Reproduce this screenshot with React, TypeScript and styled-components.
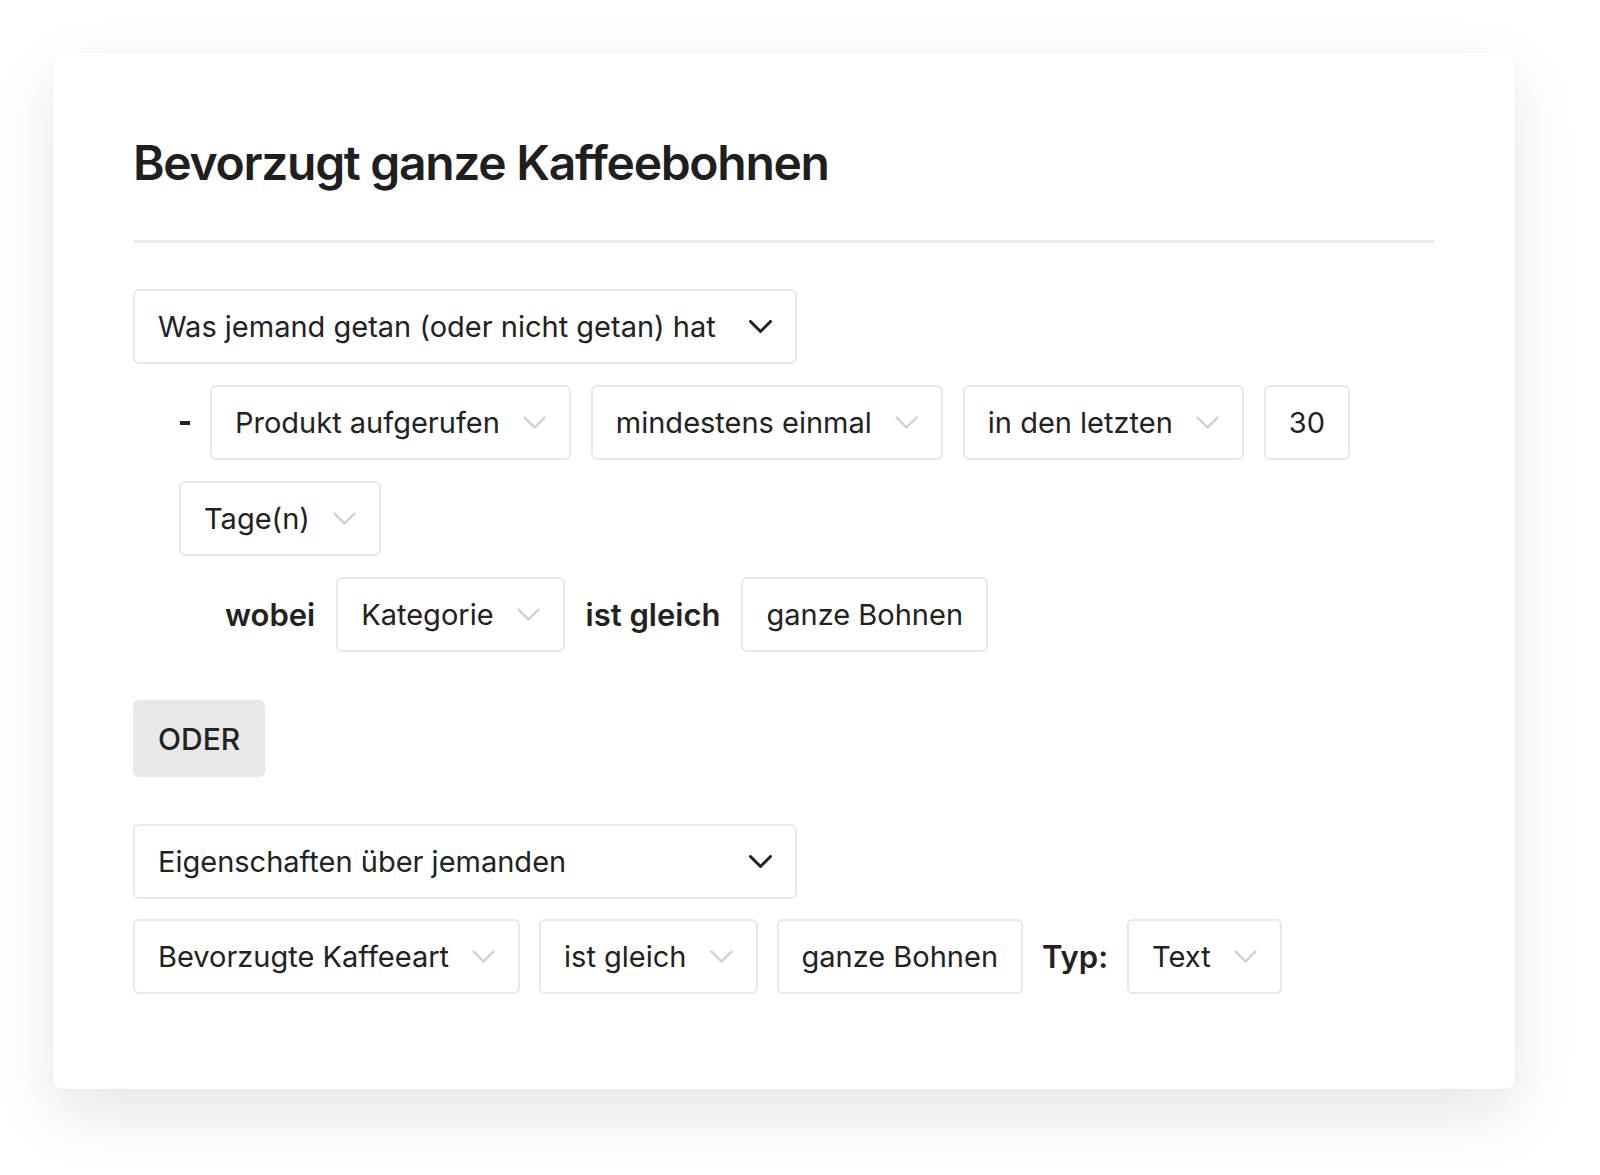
import styled, { createGlobalStyle } from "styled-components";

const GlobalStyle = createGlobalStyle`
	body {
		margin: 0;
		background: #ffffff;
		font-family: Inter, "Liberation Sans", sans-serif;
		color: #222222;
	}
`;

const Page = styled.div`
	min-height: 1175px;
	box-sizing: border-box;
	padding: 53px 0 86px 53px;
	background: #ffffff;
`;

const Card = styled.div`
	width: 1462px;
	box-sizing: border-box;
	padding: 81px 80px 95px;
	background: #ffffff;
	border-radius: 10px;
	box-shadow:
		0 24px 64px rgba(0, 0, 0, 0.1),
		0 0 0 1px rgba(0, 0, 0, 0.015);
`;

const Title = styled.h1`
	margin: 0;
	font-size: 48px;
	line-height: 58px;
	font-weight: 600;
	letter-spacing: -1.3px;
	color: #1f1f1f;
`;

const Divider = styled.hr`
	margin: 48px 0 46px;
	height: 3px;
	border: none;
	background: #ececec;
`;

const Section = styled.div`
	display: flex;
	flex-direction: column;
	align-items: flex-start;
`;

const Field = styled.div<{ $wide?: boolean; $center?: boolean }>`
	display: inline-flex;
	align-items: center;
	justify-content: ${(p) => (p.$wide ? "space-between" : p.$center ? "center" : "flex-start")};
	gap: 23px;
	box-sizing: border-box;
	height: 75px;
	width: ${(p) => (p.$wide ? "664px" : "auto")};
	padding: 0 23px;
	border: 2px solid #e8e8e8;
	border-radius: 6px;
	font-size: 29px;
	line-height: 1;
	color: #222222;
	white-space: nowrap;
`;

const Row = styled.div<{ $indent?: number; $top?: number; $gap?: number }>`
	display: flex;
	flex-wrap: wrap;
	align-items: center;
	gap: 21px ${(p) => p.$gap ?? 20}px;
	margin-top: ${(p) => p.$top ?? 21}px;
	padding-left: ${(p) => p.$indent ?? 0}px;
`;

const Label = styled.span`
	font-size: 31px;
	font-weight: 600;
	color: #222222;
	white-space: nowrap;
`;

const Dash = styled.span`
	display: inline-block;
	width: 10px;
	height: 4px;
	background: #222222;
	margin: 0 0 0 1px;
`;

const OrButton = styled.button`
	margin-top: 48px;
	height: 77px;
	padding: 0 25px;
	border: none;
	border-radius: 6px;
	background: #e8e8e8;
	font-family: inherit;
	font-size: 30px;
	font-weight: 500;
	color: #222222;
	display: block;
`;

const SecondSection = styled(Section)`
	margin-top: 47px;
`;

function Chevron({ dark }: { dark?: boolean }) {
	return (
		<svg width="23" height="14" viewBox="0 0 23 14" fill="none">
			<polyline
				points="1.5,1.5 11.5,11.5 21.5,1.5"
				stroke={dark ? "#222222" : "#cfcfcf"}
				strokeWidth={dark ? 3 : 2.4}
				strokeLinecap="round"
				strokeLinejoin="round"
			/>
		</svg>
	);
}

function Select({ label, dark, wide }: { label: string; dark?: boolean; wide?: boolean }) {
	return (
		<Field $wide={wide}>
			<span>{label}</span>
			<Chevron dark={dark} />
		</Field>
	);
}

export default function App() {
	return (
		<>
			<GlobalStyle />
			<Page>
				<Card>
					<Title>Bevorzugt ganze Kaffeebohnen</Title>
					<Divider />
					<Section>
						<Select label="Was jemand getan (oder nicht getan) hat" dark wide />
						<Row $indent={46}>
							<Dash />
							<Select label="Produkt aufgerufen" />
							<Select label="mindestens einmal" />
							<Select label="in den letzten" />
							<Field $center>30</Field>
							<Select label="Tage(n)" />
						</Row>
						<Row $indent={92} $gap={21}>
							<Label>wobei</Label>
							<Select label="Kategorie" />
							<Label>ist gleich</Label>
							<Field>ganze Bohnen</Field>
						</Row>
					</Section>
					<OrButton type="button">ODER</OrButton>
					<SecondSection>
						<Select label="Eigenschaften über jemanden" dark wide />
						<Row $top={20} $gap={19}>
							<Select label="Bevorzugte Kaffeeart" />
							<Select label="ist gleich" />
							<Field>ganze Bohnen</Field>
							<Label>Typ:</Label>
							<Select label="Text" />
						</Row>
					</SecondSection>
				</Card>
			</Page>
		</>
	);
}
